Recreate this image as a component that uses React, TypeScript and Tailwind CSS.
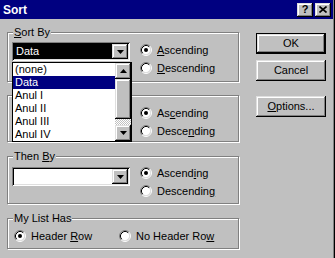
import React from 'react';

const raised =
  'bg-[#c0c0c0] shadow-[inset_-1px_-1px_0_#000,inset_1px_1px_0_#dfdfdf,inset_-2px_-2px_0_#808080,inset_2px_2px_0_#fff]';

function Radio({ checked }: { checked?: boolean }) {
  return (
    <svg width="12" height="12" viewBox="0 0 12 12" className="shrink-0">
      <circle cx="6" cy="6" r="4.5" fill="#fff" />
      <path d="M2.11 9.89A5.5 5.5 0 0 1 9.89 2.11" stroke="#808080" fill="none" />
      <path d="M9.89 2.11A5.5 5.5 0 0 1 2.11 9.89" stroke="#fff" fill="none" />
      <path d="M2.82 9.18A4.5 4.5 0 0 1 9.18 2.82" stroke="#000" fill="none" />
      <path d="M9.18 2.82A4.5 4.5 0 0 1 2.82 9.18" stroke="#dfdfdf" fill="none" />
      {checked && <circle cx="6" cy="6" r="2" fill="#000" />}
    </svg>
  );
}

function RadioRow({ checked, children }: { checked?: boolean; children: React.ReactNode }) {
  return (
    <div className="h-[18px] flex items-center gap-[5px]">
      <Radio checked={checked} />
      <span className="leading-[13px]">{children}</span>
    </div>
  );
}

function Arrow({ up }: { up?: boolean }) {
  return (
    <svg width="7" height="4" viewBox="0 0 7 4">
      <path d={up ? 'M3.5 0L7 4H0Z' : 'M0 0H7L3.5 4Z'} fill="#000" />
    </svg>
  );
}

function ArrowButton({ up, h = 15 }: { up?: boolean; h?: number }) {
  return (
    <div className={`${raised} w-[16px] ${h === 16 ? 'h-[16px]' : 'h-[15px]'} shrink-0 flex items-center justify-center`}>
      <Arrow up={up} />
    </div>
  );
}

function Combo({ value, selected }: { value?: string; selected?: boolean }) {
  return (
    <div className="w-[118px] h-[19px] p-[2px] bg-white flex shadow-[inset_1px_1px_0_#808080,inset_-1px_-1px_0_#fff,inset_2px_2px_0_#000,inset_-2px_-2px_0_#dfdfdf]">
      <div className={`flex-1 flex items-center pl-[2px] ${selected ? 'bg-black text-white' : ''}`}>{value}</div>
      <ArrowButton />
    </div>
  );
}

function Group({ title, className, children }: { title?: React.ReactNode; className?: string; children: React.ReactNode }) {
  return (
    <div className={`relative border border-[#808080] shadow-[1px_1px_0_#fff,inset_1px_1px_0_#fff] ${className ?? ''}`}>
      {title && (
        <span className="absolute -top-[7px] left-[5px] px-[1px] bg-[#c0c0c0] leading-[13px]">{title}</span>
      )}
      {children}
    </div>
  );
}

function DropList() {
  const items = ['(none)', 'Data', 'Anul I', 'Anul II', 'Anul III', 'Anul IV'];
  return (
    <div className="absolute left-0 top-[20px] z-10 w-[120px] h-[80px] border border-black bg-white flex">
      <div className="flex-1 flex flex-col">
        {items.map((item) => (
          <div
            key={item}
            className={`h-[13px] leading-[13px] pl-[2px] ${item === 'Data' ? 'bg-[#000080] text-white' : ''}`}
          >
            {item}
          </div>
        ))}
      </div>
      <div className="w-[16px] flex flex-col">
        <ArrowButton up h={16} />
        <div className={`${raised} h-[40px]`} />
        <div className="flex-1 bg-[repeating-conic-gradient(#fff_0_25%,#c0c0c0_0_50%)] bg-[length:2px_2px]" />
        <ArrowButton h={16} />
      </div>
    </div>
  );
}

function Button({ children, def }: { children: React.ReactNode; def?: boolean }) {
  if (def) {
    return (
      <div className="w-[70px] h-[21px] border border-black flex">
        <div className={`${raised} flex-1 flex items-center justify-center`}>{children}</div>
      </div>
    );
  }
  return <div className={`${raised} w-[70px] h-[21px] flex items-center justify-center`}>{children}</div>;
}

export default function App() {
  return (
    <div className="w-[335px] h-[258px] bg-[#c0c0c0] pr-[2px] shadow-[inset_-1px_0_0_#000,inset_-2px_0_0_#808080] flex flex-col font-['Liberation_Sans',Arial,sans-serif] text-[11px] text-black select-none overflow-hidden">
      <div className="h-[19px] bg-[#000080] flex items-center pl-[3px] pr-[2px]">
        <span className="flex-1 text-white font-bold text-[12px]">Sort</span>
        <div className="flex gap-[2px]">
          <div className={`${raised} w-[16px] h-[14px] flex items-center justify-center font-bold text-[11px] leading-none`}>?</div>
          <div className={`${raised} w-[16px] h-[14px] flex items-center justify-center`}>
            <svg width="8" height="7" viewBox="0 0 8 7">
              <path d="M0.5 0.5L7.5 6.5M7.5 0.5L0.5 6.5" stroke="#000" strokeWidth="1.6" />
            </svg>
          </div>
        </div>
      </div>

      <div className="flex pl-[7px]">
        <div className="w-[232px] flex flex-col pt-[13px]">
          <Group title={<><u>S</u>ort By</>} className="h-[50px] z-10">
            <div className="flex pt-[8px] pl-[4px]">
              <div className="relative mt-[1px]">
                <Combo value="Data" selected />
                <DropList />
              </div>
              <div className="flex flex-col ml-[10px]">
                <RadioRow checked><u>A</u>scending</RadioRow>
                <RadioRow><u>D</u>escending</RadioRow>
              </div>
            </div>
          </Group>

          <Group title={<>Then <u>B</u>y</>} className="h-[47px] mt-[13px]">
            <div className="flex pt-[8px] pl-[4px]">
              <div className="mt-[1px]">
                <Combo />
              </div>
              <div className="flex flex-col ml-[10px]">
                <RadioRow checked>As<u>c</u>ending</RadioRow>
                <RadioRow>Desce<u>n</u>ding</RadioRow>
              </div>
            </div>
          </Group>

          <Group title={<>Then <u>B</u>y</>} className="h-[48px] mt-[14px]">
            <div className="flex pt-[7px] pl-[4px]">
              <div className="mt-[3px]">
                <Combo />
              </div>
              <div className="flex flex-col ml-[10px]">
                <RadioRow checked>Ascend<u>i</u>ng</RadioRow>
                <RadioRow>Descendin<u>g</u></RadioRow>
              </div>
            </div>
          </Group>

          <Group title="My List Has" className="h-[31px] mt-[14px]">
            <div className="flex pt-[8px] pl-[6px]">
              <div className="w-[105px]">
                <RadioRow checked>Header <u>R</u>ow</RadioRow>
              </div>
              <RadioRow>No Header Ro<u>w</u></RadioRow>
            </div>
          </Group>
        </div>

        <div className="ml-[17px] pt-[14px] flex flex-col">
          <Button def>OK</Button>
          <div className="mt-[6px]">
            <Button>Cancel</Button>
          </div>
          <div className="mt-[15px]">
            <Button><span><u>O</u>ptions...</span></Button>
          </div>
        </div>
      </div>
    </div>
  );
}
